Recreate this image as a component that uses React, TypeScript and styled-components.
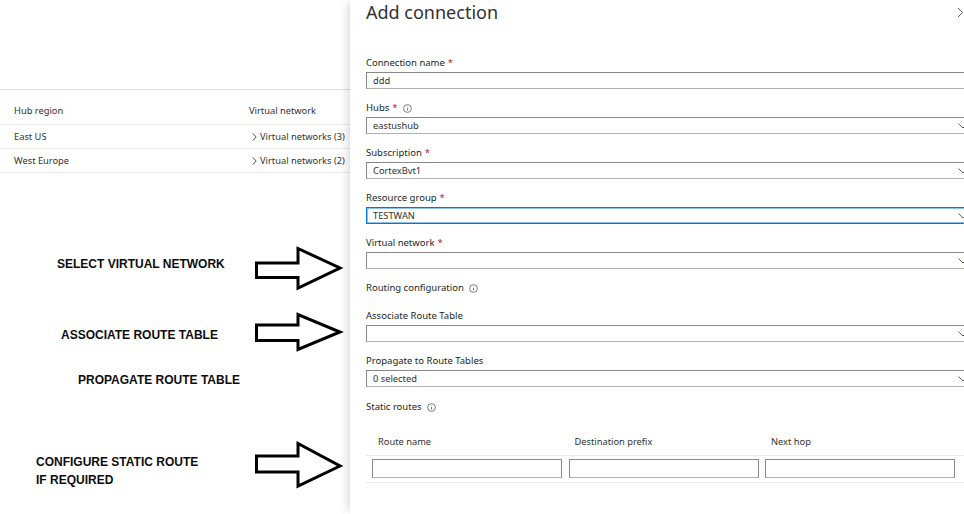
import React from "react";
import styled, { createGlobalStyle } from "styled-components";

const GlobalStyle = createGlobalStyle`
  html, body { margin: 0; padding: 0; background: #ffffff; overflow: hidden; }
  body { font-family: "Noto Sans", "Open Sans", sans-serif; color: #323130; }
  * { box-sizing: border-box; }
`;

const Page = styled.div`
  position: relative;
  display: flex;
  width: 978px;
  height: 514px;
  overflow: hidden;
  background: #ffffff;
`;

/* ---------- left: underlying hub list ---------- */
const LeftPane = styled.div`
  flex: none;
  width: 350px;
  display: flex;
  flex-direction: column;
`;

const TopArea = styled.div`
  height: 90px;
  border-bottom: 1px solid #e1dfdd;
`;

const HubRow = styled.div<{ $header?: boolean }>`
  display: grid;
  grid-template-columns: 235px 1fr;
  padding-left: 14px;
  height: ${(p) => (p.$header ? 35 : 24)}px;
  align-items: ${(p) => (p.$header ? "end" : "center")};
  padding-bottom: ${(p) => (p.$header ? 7 : 0)}px;
  border-bottom: 1px solid #edebe9;
  font-size: 9.3px;
  line-height: 12px;
  color: #323130;
`;

const LinkCell = styled.span`
  display: flex;
  align-items: center;
  gap: 3px;
  padding-left: 3px;
  white-space: nowrap;
`;

/* ---------- right: add connection panel ---------- */
const Panel = styled.div`
  position: relative;
  z-index: 1;
  flex: none;
  width: 628px;
  height: 514px;
  padding-left: 16px;
  background: #ffffff;
  box-shadow: -5px 0 9px -3px rgba(0, 0, 0, 0.16);
  display: flex;
  flex-direction: column;
`;

const TitleRow = styled.div`
  height: 24px;
  display: flex;
  align-items: center;
  justify-content: space-between;
  padding-right: 14px;
`;

const Title = styled.h1`
  margin: 0;
  font-size: 18px;
  font-weight: 400;
  line-height: 24px;
  color: #323130;
`;

const CloseButton = styled.span`
  display: flex;
  align-items: center;
`;

const Form = styled.div`
  margin-top: 31px;
  display: flex;
  flex-direction: column;
`;

const Field = styled.div<{ $gap?: number }>`
  display: flex;
  flex-direction: column;
  margin-bottom: ${(p) => p.$gap ?? 11}px;
`;

const Label = styled.div`
  height: 16px;
  line-height: 16px;
  font-size: 9.5px;
  color: #201f1e;
  display: flex;
  align-items: center;
  gap: 5px;
  margin-bottom: 1px;
`;

const Req = styled.span`
  color: #a4262c;
  margin-left: 3px;
`;

const Input = styled.div<{ $focused?: boolean }>`
  position: relative;
  height: 17px;
  width: 100%;
  border: 1px solid ${(p) => (p.$focused ? "#0078d4" : "#8a8886")};
  border-bottom-color: ${(p) => (p.$focused ? "#0078d4" : "#b3b0ad")};
  box-shadow: ${(p) => (p.$focused ? "inset 0 0 0 1px rgba(0,120,212,0.45)" : "none")};
  padding-left: 6px;
  font-size: 9.3px;
  line-height: 15px;
  color: #323130;
  background: #ffffff;
`;

const Chevron = styled.svg`
  position: absolute;
  right: 9px;
  top: 5px;
`;

const RoutesTable = styled.div`
  margin-top: 12px;
  display: flex;
  flex-direction: column;
`;

const RoutesRow = styled.div<{ $header?: boolean }>`
  display: grid;
  grid-template-columns: repeat(3, 190px);
  column-gap: 6.5px;
  padding-left: 6px;
  height: ${(p) => (p.$header ? 28 : 27)}px;
  align-items: ${(p) => (p.$header ? "center" : "start")};
  padding-top: ${(p) => (p.$header ? 0 : 3)}px;
  border-bottom: 1px solid #edebe9;
  font-size: 9.3px;
  color: #323130;
`;

const HeadCell = styled.span`
  padding-left: 6px;
`;

const CellInput = styled.div`
  height: 19px;
  border: 1px solid #8a8886;
  border-bottom-color: #b3b0ad;
  background: #fff;
`;

/* ---------- annotation overlay ---------- */
const Note = styled.div<{ $x: number; $y: number }>`
  position: absolute;
  left: ${(p) => p.$x}px;
  top: ${(p) => p.$y}px;
  font-family: "Liberation Sans", Arial, sans-serif;
  font-weight: 700;
  font-size: 12px;
  line-height: 17.5px;
  color: #0d0d0d;
  white-space: nowrap;
  z-index: 2;
`;

const ArrowSvg = styled.svg<{ $x: number; $y: number }>`
  position: absolute;
  left: ${(p) => p.$x}px;
  top: ${(p) => p.$y}px;
  z-index: 2;
  overflow: visible;
`;

const InfoIcon = () => (
  <svg width="9" height="9" viewBox="0 0 9 9">
    <circle cx="4.5" cy="4.5" r="3.9" fill="none" stroke="#605e5c" strokeWidth="0.8" />
    <line x1="4.5" y1="4" x2="4.5" y2="6.6" stroke="#605e5c" strokeWidth="0.8" />
    <circle cx="4.5" cy="2.7" r="0.45" fill="#605e5c" />
  </svg>
);

const DownChevron = () => (
  <Chevron width="10" height="6" viewBox="0 0 10 6">
    <polyline points="0.5,0.5 5,5 9.5,0.5" fill="none" stroke="#605e5c" strokeWidth="1" />
  </Chevron>
);

const SmallRight = () => (
  <svg width="5" height="8" viewBox="0 0 5 8">
    <polyline points="0.8,0.5 4.2,4 0.8,7.5" fill="none" stroke="#323130" strokeWidth="0.9" />
  </svg>
);

const Arrow = ({ x, y, h, points }: { x: number; y: number; h: number; points: string }) => (
  <ArrowSvg $x={x} $y={y} width="92" height={h} viewBox={`0 0 92 ${h}`}>
    <polygon points={points} fill="#ffffff" stroke="#000000" strokeWidth="3" strokeLinejoin="miter" />
  </ArrowSvg>
);

type FieldDef = { label: string; req?: boolean; info?: boolean; value?: string; dropdown?: boolean; focused?: boolean; labelOnly?: boolean; gap?: number };

const fields: FieldDef[] = [
  { label: "Connection name", req: true, value: "ddd" },
  { label: "Hubs", req: true, info: true, value: "eastushub", dropdown: true },
  { label: "Subscription", req: true, value: "CortexBvt1", dropdown: true },
  { label: "Resource group", req: true, value: "TESTWAN", dropdown: true, focused: true },
  { label: "Virtual network", req: true, value: "", dropdown: true },
  { label: "Routing configuration", info: true, labelOnly: true },
  { label: "Associate Route Table", value: "", dropdown: true },
  { label: "Propagate to Route Tables", value: "0 selected", dropdown: true, gap: 12 },
  { label: "Static routes", info: true, labelOnly: true, gap: 0 },
];

const hubs = [
  { region: "East US", count: 3 },
  { region: "West Europe", count: 2 },
];

export default function App() {
  return (
    <>
      <GlobalStyle />
      <Page>
        <LeftPane>
          <TopArea />
          <HubRow $header>
            <span>Hub region</span>
            <span>Virtual network</span>
          </HubRow>
          {hubs.map((h) => (
            <HubRow key={h.region}>
              <span>{h.region}</span>
              <LinkCell>
                <SmallRight />
                Virtual networks ({h.count})
              </LinkCell>
            </HubRow>
          ))}
        </LeftPane>

        <Panel>
          <TitleRow>
            <Title>Add connection</Title>
            <CloseButton>
              <svg width="7" height="11" viewBox="0 0 7 11">
                <polyline points="1,1 5.5,5.5 1,10" fill="none" stroke="#605e5c" strokeWidth="1" />
              </svg>
            </CloseButton>
          </TitleRow>
          <Form>
            {fields.map((f) => (
              <Field key={f.label} $gap={f.gap}>
                <Label>
                  <span>
                    {f.label}
                    {f.req && <Req>*</Req>}
                  </span>
                  {f.info && <InfoIcon />}
                </Label>
                {!f.labelOnly && (
                  <Input $focused={f.focused}>
                    {f.value}
                    {f.dropdown && <DownChevron />}
                  </Input>
                )}
              </Field>
            ))}
          </Form>
          <RoutesTable>
            <RoutesRow $header>
              <HeadCell>Route name</HeadCell>
              <HeadCell>Destination prefix</HeadCell>
              <HeadCell>Next hop</HeadCell>
            </RoutesRow>
            <RoutesRow>
              <CellInput />
              <CellInput />
              <CellInput />
            </RoutesRow>
          </RoutesTable>
        </Panel>

        <Note $x={57} $y={256}>SELECT VIRTUAL NETWORK</Note>
        <Note $x={61} $y={327}>ASSOCIATE ROUTE TABLE</Note>
        <Note $x={78} $y={372}>PROPAGATE ROUTE TABLE</Note>
        <Note $x={36} $y={454}>
          CONFIGURE STATIC ROUTE
          <br />
          IF REQUIRED
        </Note>

        <Arrow x={253} y={245} h={47} points="3.5,18 45,18 45,3.5 87,23 45,43 45,32.5 3.5,32.5" />
        <Arrow x={253} y={311} h={42} points="3.5,14 45,14 45,3.5 87,21 45,38.5 45,29.5 3.5,29.5" />
        <Arrow x={253} y={440} h={50} points="3.5,16 45,16 45,3.5 87,26 45,46 45,32 3.5,32" />
      </Page>
    </>
  );
}
